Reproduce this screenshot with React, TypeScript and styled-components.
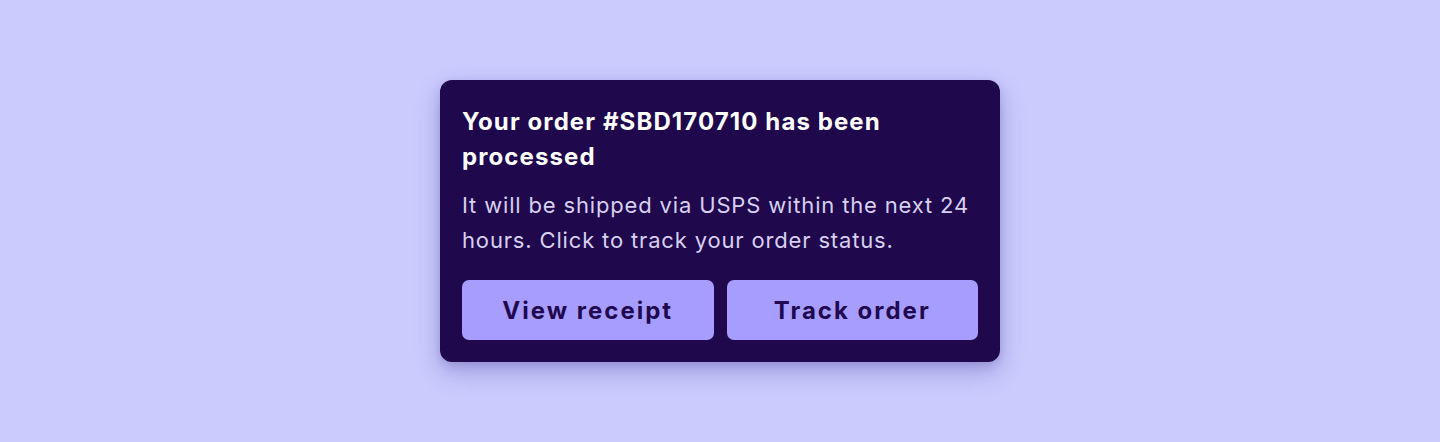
import React from "react";
import styled, { createGlobalStyle } from "styled-components";

const Global = createGlobalStyle`
  html, body { margin: 0; padding: 0; }
  body {
    background: #cbcbfe;
    font-family: Inter, "Noto Sans", sans-serif;
  }
  * { box-sizing: border-box; }
`;

const Page = styled.div`
  width: 1440px;
  height: 442px;
  display: flex;
  align-items: center;
  justify-content: center;
`;

const Card = styled.div`
  width: 560px;
  background: #1f084c;
  border-radius: 12px;
  padding: 24px 22px 22px;
  box-shadow: 0 10px 24px rgba(70, 60, 150, 0.32), 0 3px 8px rgba(70, 60, 150, 0.18);
  display: flex;
  flex-direction: column;
`;

const Title = styled.h2`
  margin: 0;
  color: #ffffff;
  font-size: 24px;
  line-height: 35px;
  font-weight: 700;
  letter-spacing: 1.1px;
`;

const Body = styled.p`
  margin: 14px 0 0 0;
  color: #d7d0f0;
  font-size: 22px;
  line-height: 35px;
  font-weight: 400;
  letter-spacing: 0.84px;
`;

const Actions = styled.div`
  margin-top: 22px;
  display: grid;
  grid-template-columns: 1fr 1fr;
  gap: 13px;
`;

const Button = styled.button`
  height: 60px;
  border: none;
  border-radius: 7px;
  background: #a69dfe;
  color: #21094f;
  font-family: Inter, "Noto Sans", sans-serif;
  font-size: 24px;
  font-weight: 700;
  letter-spacing: 2px;
  cursor: pointer;
`;

export default function App() {
  return (
    <>
      <Global />
      <Page>
        <Card>
          <Title>Your order #SBD170710 has been processed</Title>
          <Body>It will be shipped via USPS within the next 24 hours. Click to track your order status.</Body>
          <Actions>
            <Button>View receipt</Button>
            <Button>Track order</Button>
          </Actions>
        </Card>
      </Page>
    </>
  );
}
